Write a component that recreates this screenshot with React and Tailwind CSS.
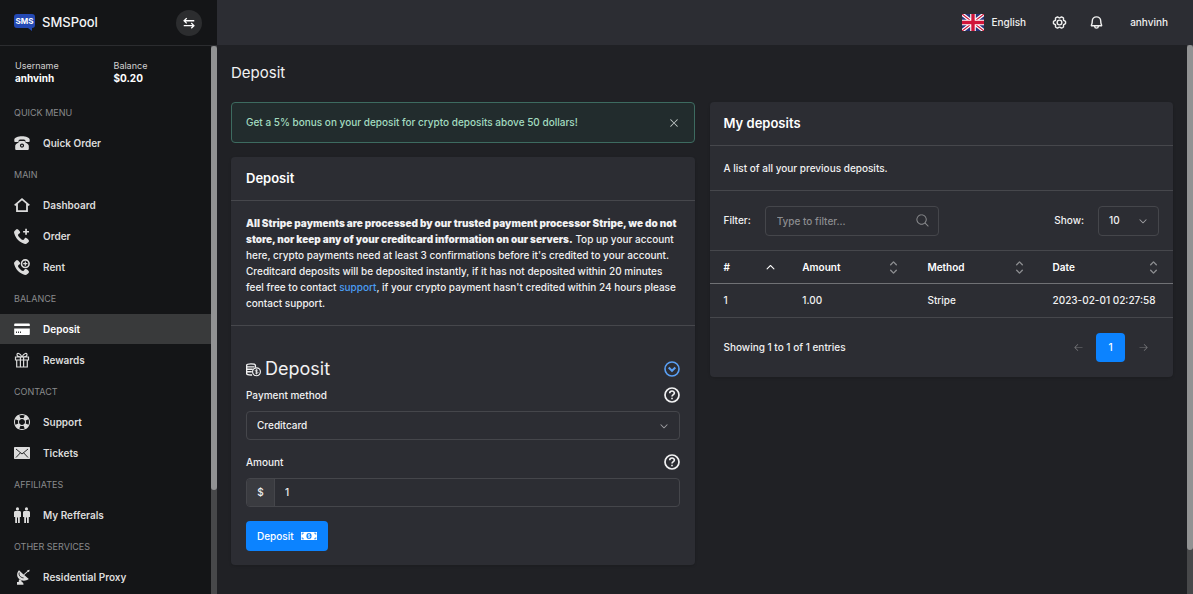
import { ImLifebuoy } from "react-icons/im";
import { PiBellBold, PiGearSixBold, PiMagnifyingGlass, PiArrowLeft, PiArrowRight, PiX, PiCaretDownBold, PiCaretUpBold, PiCaretUpDownBold } from "react-icons/pi";

const HANDSET = "M11 10c-1 1-1 2-2 2s-2-1-3-2-2-2-2-3 1-1 2-2-2-4-3-4-3 3-3 3c0 2 2.055 6.055 4 8s6 4 8 4c0 0 3-2 3-3s-3-4-4-3z";

const Icon = ({ children, size = 16 }) => (
  <svg viewBox="0 0 16 16" width={size} height={size} fill="currentColor" className="shrink-0" aria-hidden="true">
    {children}
  </svg>
)

const TelephoneIcon = () => (
  <Icon>
    <path d="M8 1.200C4 1.200.3 2.500.3 4.700v1.500c0 .5.3.8.8.8h2.800c.5 0 .8-.3.8-.8V4.900C5.500 4.600 6.700 4.500 8 4.500s2.500.1 3.300.4v1.300c0 .5.3.8.8.8h2.800c.5 0 .8-.3.8-.8V4.700c0-2.200-3.700-3.500-7.700-3.500z" />
    <path fillRule="evenodd" d="M5.500 6h5c.5 1.200 1.400 1.900 2.600 2.600 1.100.7 1.700 1.500 1.700 2.700V14c0 .5-.4.900-.9.900H2.100c-.5 0-.9-.4-.9-.9v-2.700c0-1.200.6-2 1.700-2.700C4.100 7.900 5 7.200 5.500 6zM8 8.500a2.100 2.100 0 1 0 0 4.200 2.100 2.100 0 0 0 0-4.200z" />
    <circle cx="8" cy="10.600" r="0.900" />
  </Icon>
)

const HouseIcon = () => (
  <Icon>
    <path d="M.7 8.400 8 2.100l7.300 6.300M3 7v7.200h10V7" fill="none" stroke="currentColor" strokeWidth="1.800" />
  </Icon>
)

const PhonePlusIcon = () => (
  <Icon>
    <path d={HANDSET} />
    <path d="M11.200.8v2.100H9.100v1.700h2.100v2.100h1.700V4.600H15V2.900h-2.100V.8z" />
  </Icon>
)

const PhoneCircleIcon = () => (
  <Icon>
    <path d={HANDSET} />
    <circle cx="11.300" cy="4.700" r="5.200" className="fill-[#141517]" />
    <circle cx="11.300" cy="4.700" r="3.800" fill="none" stroke="currentColor" strokeWidth="1.600" />
    <path d="M10.700 2.600v1.500H9.200v1.200h1.500v1.500h1.200V5.300h1.500V4.100h-1.500V2.600z" />
  </Icon>
)

const CardIcon = () => (
  <Icon>
    <path fillRule="evenodd" d="M1 2.500h14c.5 0 .8.300.8.800v10c0 .5-.3.800-.8.800H1c-.5 0-.8-.3-.8-.8v-10c0-.5.3-.8.800-.8zM.2 5v2.500h15.600V5zM2 10.500V12h1v-1.500zM4 10.500V12h1v-1.500zM6 10.500V12h1v-1.500z" />
  </Icon>
)

const GiftIcon = () => (
  <Icon>
    <path d="M1.500 5h13v3h-13zM2.700 8h10.600v7H2.700zM6.400 5v10M9.600 5v10M8 5C6 1 3 .5 3 2.700 3 4.300 5 5 8 5c3 0 5-.7 5-2.300C13 .5 10 1 8 5z" fill="none" stroke="currentColor" strokeWidth="1.200" />
  </Icon>
)

const MailIcon = () => (
  <Icon>
    <rect y="2" width="16" height="12" rx="0.700" />
    <path d="M2 4l6 5 6-5M2 12.500l4.500-4.800M14 12.500 9.500 7.700" fill="none" className="stroke-[#141517]" strokeWidth="0.900" />
  </Icon>
)

const PeopleIcon = () => (
  <Icon>
    <circle cx="3.500" cy="1.900" r="1.600" />
    <path d="M1.500 4h4C6.400 4 7 4.600 7 5.500V10H5.800v6H4v-5.500H3V16H1.200v-6H0V5.500C0 4.600.6 4 1.500 4z" />
    <circle cx="12.500" cy="1.900" r="1.600" />
    <path d="M10.500 4h4c.9 0 1.500.6 1.500 1.500V10h-1.200v6H13v-5.500h-1V16h-1.800v-6H9V5.500C9 4.600 9.600 4 10.500 4z" />
  </Icon>
)

const DishIcon = () => (
  <Icon>
    <path d="M5 1.200C2.400 4 2.700 7.600 5 9.800s6.500 2.700 9.800.2l-4.600-4L14 2.700l1 .3.700-2.300-2.500.5.200.9-3.900 3.300z" />
    <path d="M5.300 3.600c-.8 2.500.7 4.800 4.200 5.300" fill="none" className="stroke-[#141517]" strokeWidth="0.900" />
    <path d="M5 10.300 4.700 13H3v2.700h6.500c0-1.700-.6-2.700-1.800-2.700l-.2-1.500z" />
  </Icon>
)

const CoinsIcon = () => (
  <Icon size={15}>
    <path d="M10 6V3.300C10 2.500 8 2 5.300 2S.7 2.500.7 3.300v9c0 .9 2 1.500 4.600 1.500h1.200M.7 5.200h8M.7 7.800h6.500M.7 10.400h5.500" fill="none" stroke="currentColor" strokeWidth="1.500" />
    <circle cx="11.200" cy="10.400" r="4.200" fill="none" stroke="currentColor" strokeWidth="1.200" />
    <path d="M12.700 9c-.4-.5-2.900-.7-2.900.3 0 1.200 3 .7 3 2 0 1.100-2.500 1-3.100.2M11.200 7.700v5.500" fill="none" stroke="currentColor" strokeWidth="0.900" />
  </Icon>
)

const CashIcon = () => (
  <svg viewBox="0 0 16 10" width="16" height="10" fill="none" aria-hidden="true">
    <path d="M0 1h16v8H0z" fill="#fff" />
    <path d="M1.200 3.600V2.200h1.600M13.200 2.200h1.600v1.400M14.800 6.400v1.400h-1.600M2.800 7.800H1.200V6.400" stroke="#0c83ff" strokeWidth="0.900" />
    <ellipse cx="8" cy="5" rx="2.600" ry="3" fill="#0c83ff" />
    <path d="M9 3.800c-.5-.5-2-.4-2 .3 0 .9 2 .6 2 1.600 0 .8-1.600.8-2.100.2M8 2.800v4.400" stroke="#fff" strokeWidth="0.700" />
  </svg>
)

const HelpIcon = () => (
  <Icon>
    <circle cx="8" cy="8" r="7" fill="none" stroke="currentColor" strokeWidth="1.700" />
    <path d="M5.700 6.300c0-3 4.700-3 4.700-.2C10.400 7.700 8 7.700 8 9.600" fill="none" stroke="currentColor" strokeWidth="1.600" />
    <path d="M7.200 10.700h1.600v1.600H7.200z" />
  </Icon>
)

const SwapIcon = () => (
  <Icon size={12}>
    <path d="M15 5H2M5 1.500 1.500 5 5 8.500M1 11.500h13M11 8l3.500 3.500L11 15" fill="none" stroke="currentColor" strokeWidth="1.800" />
  </Icon>
)

const Flag = () => (
  <svg viewBox="0 0 22 17" width="22" height="17" aria-hidden="true">
    <path d="M0 0h22v17H0z" fill="#29337a" />
    <path d="M0 0l22 17M22 0 0 17" stroke="#fff" strokeWidth="3.600" />
    <path d="M0 0l22 17M22 0 0 17" stroke="#d0153a" strokeWidth="1.200" />
    <path d="M11 0v17M0 8.500h22" stroke="#fff" strokeWidth="5.600" />
    <path d="M11 0v17M0 8.500h22" stroke="#d0153a" strokeWidth="3.400" />
  </svg>
)

const Logo = () => (
  <svg viewBox="0 0 21 17" width="21" height="17" aria-hidden="true">
    <path d="M3 0h15a3 3 0 0 1 3 3v8a3 3 0 0 1-3 3v3l-4-3H3a3 3 0 0 1-3-3V3a3 3 0 0 1 3-3z" fill="#2449b4" />
    <text x="10.500" y="10" textAnchor="middle" fontSize="8" fontWeight="700" fill="#fff">SMS</text>
  </svg>
)

const menu = [
  { title: "QUICK MENU", items: [{ name: "Quick Order", icon: <TelephoneIcon /> }] },
  {
    title: "MAIN",
    items: [
      { name: "Dashboard", icon: <HouseIcon /> },
      { name: "Order", icon: <PhonePlusIcon /> },
      { name: "Rent", icon: <PhoneCircleIcon /> },
    ],
  },
  {
    title: "BALANCE",
    items: [
      { name: "Deposit", icon: <CardIcon />, active: true },
      { name: "Rewards", icon: <GiftIcon /> },
    ],
  },
  {
    title: "CONTACT",
    items: [
      { name: "Support", icon: <ImLifebuoy size={16} /> },
      { name: "Tickets", icon: <MailIcon /> },
    ],
  },
  { title: "AFFILIATES", items: [{ name: "My Refferals", icon: <PeopleIcon /> }] },
  { title: "OTHER SERVICES", items: [{ name: "Residential Proxy", icon: <DishIcon /> }] },
]

const columns = [
  { name: "#", width: "w-[17%]", sorted: true },
  { name: "Amount", width: "w-[27%]" },
  { name: "Method", width: "w-[27%]" },
  { name: "Date", width: "w-[29%]" },
]

const Sidebar = () => (
  <aside className="flex w-[217px] shrink-0 flex-col bg-[#141517]">
    <div className="flex h-[46px] shrink-0 items-center justify-between border-b border-[#2b2c2f] pr-[15px] pl-[14px]">
      <a href="#" className="flex items-center gap-[7px] text-[13px] font-medium text-gray-100">
        <Logo />
        SMSPool
      </a>
      <button aria-label="Toggle sidebar" className="flex size-[26px] items-center justify-center rounded-full bg-[#2c2d2f] text-white">
        <SwapIcon />
      </button>
    </div>
    <div className="flex min-h-0 flex-1">
      <div className="min-w-0 flex-1 overflow-hidden">
        <div className="grid grid-cols-2 px-[15px] pt-[14px] pb-[13px] text-[9px] leading-3 text-[#d0d0d0]">
          <div>
            Username
            <p className="text-[10px] leading-3 font-bold text-white">anhvinh</p>
          </div>
          <div className="pl-2">
            Balance
            <p className="text-[10px] leading-3 font-bold text-white">$0.20</p>
          </div>
        </div>
        <nav>
          {menu.map((group) => (
            <div key={group.title}>
              <h2 className="flex h-[31px] items-center px-[14px] text-[9px] text-[#898a8c]">{group.title}</h2>
              {group.items.map((item) => (
                <a
                  key={item.name}
                  href="#"
                  className={
                    item.active
                      ? "mb-px flex h-[30px] items-center gap-[13px] bg-[#393a3b] px-[14px] font-semibold text-white"
                      : "mb-px flex h-[30px] items-center gap-[13px] px-[14px] font-semibold text-[#dcdcdc]"
                  }
                >
                  {item.icon}
                  {item.name}
                </a>
              ))}
            </div>
          ))}
        </nav>
      </div>
      <div className="w-[6px] bg-[#47484a]">
        <div className="h-[81%] rounded-sm bg-[#919293]"></div>
      </div>
    </div>
  </aside>
)

const Header = () => (
  <header className="flex h-[45px] shrink-0 items-center justify-end bg-[#2c2d33] pr-[25px] text-[#f0f0f0]">
    <button className="flex items-center gap-[7px] font-medium">
      <Flag />
      English
    </button>
    <button aria-label="Settings" className="ml-[26px]"><PiGearSixBold size={15} /></button>
    <button aria-label="Notifications" className="ml-[22px]"><PiBellBold size={15} /></button>
    <button className="ml-[26px] font-medium">anhvinh</button>
  </header>
)

const DepositForm = () => (
  <form className="px-[15px] pt-[31px] pb-[14px]" onSubmit={(e) => e.preventDefault()}>
    <div className="flex items-center justify-between">
      <h3 className="flex items-center gap-1 text-lg leading-6 font-normal">
        <CoinsIcon />
        Deposit
      </h3>
      <button type="button" aria-label="Collapse" className="text-[#5aa0f5]">
        <Icon>
          <circle cx="8" cy="8" r="7" fill="none" stroke="currentColor" strokeWidth="1.600" />
          <path d="M4.700 6.500 8 9.800l3.300-3.300" fill="none" stroke="currentColor" strokeWidth="2" />
        </Icon>
      </button>
    </div>
    <div className="mt-[5px] mb-[7px] flex h-[18px] items-center justify-between">
      <label htmlFor="method">Payment method</label>
      <HelpIcon />
    </div>
    <div className="relative">
      <select id="method" className="h-[29px] w-full appearance-none rounded border border-[#45464b] bg-transparent px-[10px] outline-none">
        <option>Creditcard</option>
      </select>
      <PiCaretDownBold size={10} className="pointer-events-none absolute top-[10px] right-[11px] text-[#a0a1a4]" />
    </div>
    <div className="mt-[13px] mb-[7px] flex h-[18px] items-center justify-between">
      <label htmlFor="amount">Amount</label>
      <HelpIcon />
    </div>
    <div className="flex h-[29px] overflow-hidden rounded border border-[#45464b]">
      <span className="flex w-7 items-center justify-center border-r border-[#45464b] bg-[#3a3b40]">$</span>
      <input id="amount" defaultValue="1" className="min-w-0 flex-1 px-[10px] outline-none" />
    </div>
    <button className="mt-[14px] flex h-[30px] items-center gap-[7px] rounded bg-[#0c83ff] px-[11px] font-medium text-white">
      Deposit
      <CashIcon />
    </button>
  </form>
)

const MyDeposits = () => (
  <section className="rounded bg-[#2c2d33] shadow">
    <h2 className="flex h-[43px] items-center px-[14px] text-[13px] font-semibold text-white">My deposits</h2>
    <p className="flex h-[45px] items-center border-t border-[#46474c] px-[14px]">A list of all your previous deposits.</p>
    <div className="flex h-[60px] items-center justify-between border-t border-[#46474c] px-[14px]">
      <div className="flex items-center gap-[14px]">
        <label htmlFor="filter">Filter:</label>
        <div className="relative">
          <input
            id="filter"
            placeholder="Type to filter..."
            className="h-[30px] w-[174px] rounded border border-[#45464b] px-[11px] outline-none placeholder:text-[#8b8c8f]"
          />
          <PiMagnifyingGlass size={15} className="pointer-events-none absolute top-[7px] right-[9px] text-[#8b8c8f]" />
        </div>
      </div>
      <div className="flex items-center gap-[14px]">
        <label htmlFor="show">Show:</label>
        <div className="relative">
          <select id="show" className="h-[30px] w-[61px] appearance-none rounded border border-[#45464b] bg-transparent px-[10px] outline-none">
            <option>10</option>
          </select>
          <PiCaretDownBold size={10} className="pointer-events-none absolute top-[10px] right-[11px] text-[#a0a1a4]" />
        </div>
      </div>
    </div>
    <table className="w-full table-fixed text-left">
      <thead>
        <tr className="h-[33px] border-t border-b border-t-[#46474c] border-b-[#707175]">
          {columns.map((col) => (
            <th key={col.name} className={`pr-3 pl-[14px] font-semibold text-white ${col.width}`}>
              <div className="flex items-center justify-between">
                {col.name}
                {col.sorted ? <PiCaretUpBold size={11} /> : <PiCaretUpDownBold size={15} className="text-[#8c8d90]" />}
              </div>
            </th>
          ))}
        </tr>
      </thead>
      <tbody>
        <tr className="h-[34px] border-b border-[#46474c] whitespace-nowrap">
          <td className="px-[14px]">1</td>
          <td className="px-[14px]">1.00</td>
          <td className="px-[14px]">Stripe</td>
          <td className="pl-[14px]">2023-02-01 02:27:58</td>
        </tr>
      </tbody>
    </table>
    <div className="flex h-[59px] items-center justify-between pr-3 pl-[14px]">
      <p>Showing 1 to 1 of 1 entries</p>
      <div className="flex items-center text-[#77787b]">
        <button aria-label="Previous" className="flex h-[30px] w-9 items-center justify-center"><PiArrowLeft size={11} /></button>
        <button className="size-[29px] rounded bg-[#0c83ff] font-medium text-white">1</button>
        <button aria-label="Next" className="flex h-[30px] w-9 items-center justify-center"><PiArrowRight size={11} /></button>
      </div>
    </div>
  </section>
)

const App = () => {
  return (
    <div className="flex h-screen overflow-hidden bg-[#202125] font-['Inter',sans-serif] text-[10px] text-[#f1f1f2]">
      <Sidebar />
      <div className="flex min-w-0 flex-1 flex-col">
        <Header />
        <div className="flex min-h-0 flex-1">
          <main className="min-w-0 flex-1 overflow-hidden px-[14px] font-medium">
            <h1 className="flex h-[57px] items-center text-[15px] font-normal">Deposit</h1>
            <div className="grid grid-cols-2 items-start gap-[15px]">
              <div>
                <div className="mb-[14px] flex h-[41px] items-center justify-between rounded border border-[#3d6b60] bg-[#222c2d] px-[14px] text-[#a3dcc0]">
                  Get a 5% bonus on your deposit for crypto deposits above 50 dollars!
                  <button aria-label="Close" className="text-[#c4cbc9]"><PiX size={12} /></button>
                </div>
                <section className="rounded bg-[#2c2d33] shadow">
                  <h2 className="flex h-[43px] items-center px-[15px] text-[13px] font-semibold text-white">Deposit</h2>
                  <p className="border-t border-b border-[#46474c] px-[15px] py-[14px] leading-4">
                    <b className="font-black">
                      All Stripe payments are processed by our trusted payment processor Stripe, we do not store, nor
                      keep any of your creditcard information on our servers.
                    </b>{" "}
                    Top up your account here, crypto payments need at least 3 confirmations before it's credited to your
                    account. Creditcard deposits will be deposited instantly, if it has not deposited within 20 minutes
                    feel free to contact <a href="#" className="text-[#4b9df5]">support</a>, if your crypto payment
                    hasn't credited within 24 hours please contact support.
                  </p>
                  <DepositForm />
                </section>
              </div>
              <MyDeposits />
            </div>
          </main>
          <div className="w-[6px] bg-[#47484a]">
            <div className="h-[92%] rounded-sm bg-[#919293]"></div>
          </div>
        </div>
      </div>
    </div>
  )
}

export default App
